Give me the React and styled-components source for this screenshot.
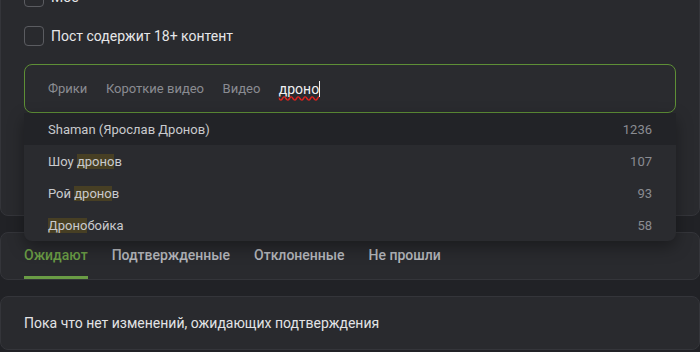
import styled, { createGlobalStyle } from "styled-components";

const GlobalStyle = createGlobalStyle`
  html, body {
    margin: 0;
    padding: 0;
    background: #212226;
    font-family: Roboto, "Liberation Sans", sans-serif;
    overflow: hidden;
  }
  * { box-sizing: border-box; }
`;

const Page = styled.div`
  display: flex;
  flex-direction: column;
  gap: 16px;
  width: 700px;
  margin-top: -38px;
`;

const Card = styled.div`
  position: relative;
  background: #292a2e;
  border: 1px solid #34353a;
  border-radius: 8px;
  padding: ${(p) => p.$pad || "0 23px"};
`;

const CheckRow = styled.label`
  display: flex;
  align-items: center;
  gap: 7px;
  height: 20px;
  margin-bottom: ${(p) => p.$mb || "19px"};
  color: #e6e6e8;
  font-size: 14px;
`;

const Box = styled.span`
  width: 20px;
  height: 20px;
  border: 1px solid #5b5c61;
  border-radius: 4px;
`;

const SearchWrap = styled.div`
  position: relative;
`;

const Input = styled.div`
  display: flex;
  align-items: center;
  gap: 18.5px;
  height: 49px;
  padding: 0 23px;
  border: 1px solid #5e8f36;
  border-radius: 8px;
  background: #2a2b2f;
  font-size: 13px;
`;

const Tag = styled.span`
  color: #8a8c92;
`;

const Typed = styled.span`
  color: #f0f0f2;
  font-size: 14px;
  text-decoration: underline wavy #e0201c;
  text-decoration-skip-ink: none;
  text-underline-offset: 2px;
`;

const Caret = styled.span`
  display: inline-block;
  width: 1px;
  height: 16px;
  background: #f0f0f2;
  margin-left: -18.5px;
`;

const Dropdown = styled.ul`
  position: absolute;
  top: 100%;
  left: 0;
  right: 0;
  margin: 0;
  padding: 0;
  list-style: none;
  background: #2a2b2f;
  border-radius: 0 0 8px 8px;
  box-shadow: 0 6px 16px rgba(0, 0, 0, 0.35);
  z-index: 5;
  overflow: hidden;
`;

const Option = styled.li`
  display: flex;
  justify-content: space-between;
  align-items: center;
  height: 32px;
  padding: 0 24px;
  font-size: 13px;
  color: #c9cacd;
  background: ${(p) => (p.$active ? "#222327" : "transparent")};
`;

const Count = styled.span`
  color: #8a8c92;
`;

const Mark = styled.mark`
  background: #473f24;
  color: inherit;
`;

const Spacer = styled.div`
  height: 78px;
`;

const Tabs = styled.div`
  display: flex;
  gap: 24px;
  height: 46px;
`;

const Tab = styled.div`
  display: flex;
  align-items: center;
  font-size: 14px;
  font-weight: 500;
  color: ${(p) => (p.$active ? "#6a9c45" : "#b4b6bb")};
  border-bottom: 3px solid ${(p) => (p.$active ? "#6a9c45" : "transparent")};
`;

const Empty = styled.div`
  font-size: 14px;
  color: #e2e3e5;
  line-height: 52px;
`;

const options = [
  { pre: "Shaman (Ярослав Дронов)", mark: "", post: "", count: 1236, active: true },
  { pre: "Шоу ", mark: "дроно", post: "в", count: 107 },
  { pre: "Рой ", mark: "дроно", post: "в", count: 93 },
  { pre: "", mark: "Дроно", post: "бойка", count: 58 },
];

export default function App() {
  return (
    <>
      <GlobalStyle />
      <Page>
        <Card $pad="24px 23px">
          <CheckRow>
            <Box />
            Мое
          </CheckRow>
          <CheckRow $mb="18px">
            <Box />
            Пост содержит 18+ контент
          </CheckRow>
          <SearchWrap>
            <Input>
              <Tag>Фрики</Tag>
              <Tag>Короткие видео</Tag>
              <Tag>Видео</Tag>
              <Typed>дроно</Typed>
              <Caret />
            </Input>
            <Dropdown>
              {options.map((o, i) => (
                <Option key={i} $active={o.active}>
                  <span>
                    {o.pre}
                    {o.mark && <Mark>{o.mark}</Mark>}
                    {o.post}
                  </span>
                  <Count>{o.count}</Count>
                </Option>
              ))}
            </Dropdown>
          </SearchWrap>
          <Spacer />
        </Card>
        <Card>
          <Tabs>
            <Tab $active>Ожидают</Tab>
            <Tab>Подтвержденные</Tab>
            <Tab>Отклоненные</Tab>
            <Tab>Не прошли</Tab>
          </Tabs>
        </Card>
        <Card>
          <Empty>Пока что нет изменений, ожидающих подтверждения</Empty>
        </Card>
      </Page>
    </>
  );
}
